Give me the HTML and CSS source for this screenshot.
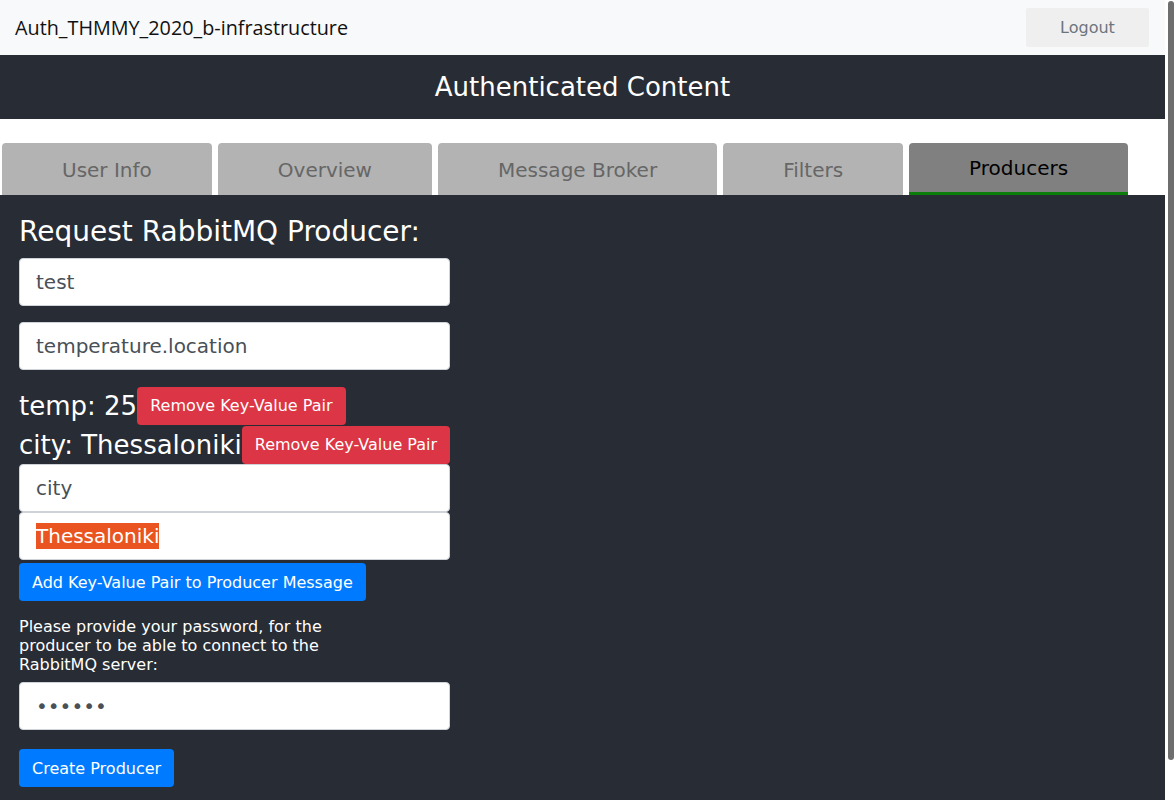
FILE: index.html
```html
<!DOCTYPE html>
<html>
<head>
<meta charset="utf-8">
<link rel="stylesheet" href="styles.css">
</head>
<body>
<div class="page">
  <nav class="navbar">
    <span class="brand">Auth_THMMY_2020_b-infrastructure</span>
    <button class="logout">Logout</button>
  </nav>
  <header class="app-header">Authenticated Content</header>
  <div class="tabs">
    <div class="tab">User Info</div>
    <div class="tab">Overview</div>
    <div class="tab">Message Broker</div>
    <div class="tab">Filters</div>
    <div class="tab active">Producers</div>
  </div>
  <main class="panel">
    <h2 class="title">Request RabbitMQ Producer:</h2>
    <div class="field mb">test</div>
    <div class="field mb">temperature.location</div>
    <div class="pair"><span class="pair-text">temp: 25</span><button class="btn danger">Remove Key-Value Pair</button></div>
    <div class="pair"><span class="pair-text">city: Thessaloniki</span><button class="btn danger">Remove Key-Value Pair</button></div>
    <div class="field">city</div>
    <div class="field"><span class="sel">Thessaloniki</span></div>
    <button class="btn primary add">Add Key-Value Pair to Producer Message</button>
    <p class="note">Please provide your password, for the producer to be able to connect to the RabbitMQ server:</p>
    <div class="field pw">&#8226;&#8226;&#8226;&#8226;&#8226;&#8226;</div>
    <button class="btn primary create">Create Producer</button>
  </main>
</div>
<div class="scrollbar"><div class="thumb"></div></div>
</body>
</html>
```
FILE: styles.css
```css
html { background: #fff; }
body {
  margin: 0;
  font-family: "DejaVu Sans", sans-serif;
  color: #212529;
}
.page {
  width: 1165px;
}
.scrollbar {
  position: fixed;
  top: 0;
  right: 0;
  width: 10px;
  height: 100vh;
  background: #fff;
}
.thumb {
  position: absolute;
  top: 1px;
  left: 3px;
  width: 6px;
  height: 759px;
  background: #6e6e6e;
  border-radius: 3px;
}
.navbar {
  height: 55px;
  background: #f8f9fa;
  display: flex;
  align-items: center;
  justify-content: space-between;
  padding: 0 16px 0 15px;
  box-sizing: border-box;
}
.brand {
  font-family: "Open Sans", sans-serif;
  font-size: 19.8px;
  color: #111;
}
.logout {
  width: 123px;
  height: 39px;
  margin-top: -1px;
  background: #efefef;
  border: none;
  border-radius: 2px;
  font-family: "DejaVu Sans", sans-serif;
  font-size: 16px;
  color: #6c757d;
}
.app-header {
  height: 64px;
  background: #282c34;
  color: #fff;
  font-size: 26px;
  display: flex;
  align-items: center;
  justify-content: center;
}
.tabs {
  display: flex;
  gap: 6px;
  padding: 24px 0 0 2px;
}
.tab {
  height: 52px;
  padding: 2px 60px 0;
  box-sizing: border-box;
  background: #b3b3b3;
  color: #666;
  font-size: 20px;
  border-radius: 4px 4px 0 0;
  display: flex;
  align-items: center;
  justify-content: center;
}
.tab.active {
  background: #808080;
  color: #000;
  border-bottom: 3px solid #0a7d0a;
  padding-top: 0;
}
.panel {
  background: #282c34;
  padding: 17px 19px 56px;
}
.panel > * { max-width: 431px; }
.title {
  margin: 0 0 6px;
  font-size: 28px;
  font-weight: normal;
  color: #fff;
  line-height: 40px;
}
.field {
  height: 48px;
  box-sizing: border-box;
  background: #fff;
  border: 1px solid #ced4da;
  border-radius: 4px;
  padding: 0 16px;
  font-size: 20px;
  color: #495057;
  display: flex;
  align-items: center;
}
.field.mb { margin-bottom: 16px; }
.sel {
  background: #e95420;
  color: #fff;
  line-height: 26px;
}
.panel > .pair {
  display: flex;
  align-items: center;
  height: 39px;
  max-width: none;
  white-space: nowrap;
}
.pair-text {
  color: #fff;
  font-size: 26px;
  flex: none;
}
.pair .btn { flex: none; }
.btn {
  height: 38px;
  border: none;
  border-radius: 4px;
  padding: 0 13px;
  font-family: "DejaVu Sans", sans-serif;
  font-size: 16px;
  color: #fff;
  display: block;
  white-space: nowrap;
}
.danger { background: #dc3545; }
.primary { background: #007bff; }
.add { margin-top: 3px; }
.note {
  color: #fff;
  font-size: 16px;
  line-height: 19px;
  margin: 16px 0 8px;
  max-width: 340px;
}
.pw {
  font-size: 20px;
  color: #495057;
}
.create { margin-top: 19px; }
```
